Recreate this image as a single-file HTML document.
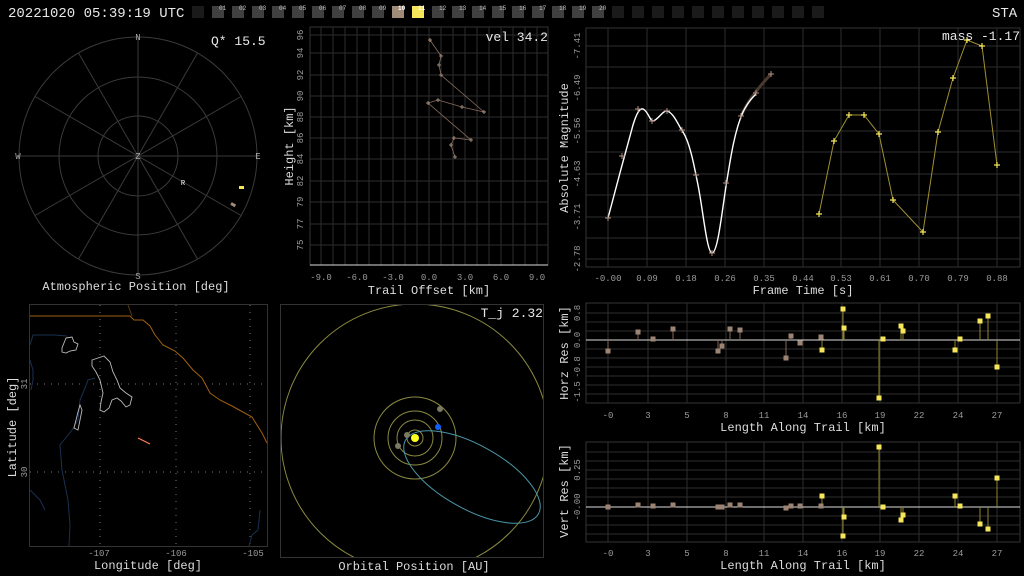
<!DOCTYPE html>
<html><head><meta charset="utf-8"><style>
html,body{margin:0;padding:0;background:#000;width:1024px;height:576px;overflow:hidden}
svg{display:block}
text{font-family:"Liberation Mono",monospace}
.t{fill:#ddd;font-size:12px}
.k{fill:#9a9a9a;font-size:9px}
.g{stroke:#2e2e2e;stroke-width:1;fill:none}
</style></head><body>
<svg width="1024" height="576" viewBox="0 0 1024 576" xmlns="http://www.w3.org/2000/svg">
<text x="8" y="17" fill="#e8e8e8" font-size="14">20221020 05:39:19 UTC</text>
<text x="992" y="17" fill="#e8e8e8" font-size="14">STA</text>
<g>
<rect x="192" y="6" width="12" height="12" fill="#1a1a1a"/>
<rect x="212" y="6" width="12" height="12" fill="#404040"/><rect x="232" y="6" width="12" height="12" fill="#404040"/>
<rect x="252" y="6" width="12" height="12" fill="#404040"/><rect x="272" y="6" width="12" height="12" fill="#404040"/>
<rect x="292" y="6" width="12" height="12" fill="#404040"/><rect x="312" y="6" width="12" height="12" fill="#404040"/>
<rect x="332" y="6" width="12" height="12" fill="#404040"/><rect x="352" y="6" width="12" height="12" fill="#404040"/>
<rect x="372" y="6" width="12" height="12" fill="#404040"/><rect x="392" y="6" width="12" height="12" fill="#a08a78"/>
<rect x="412" y="6" width="12" height="12" fill="#f5e65a"/><rect x="432" y="6" width="12" height="12" fill="#404040"/>
<rect x="452" y="6" width="12" height="12" fill="#404040"/><rect x="472" y="6" width="12" height="12" fill="#404040"/>
<rect x="492" y="6" width="12" height="12" fill="#404040"/><rect x="512" y="6" width="12" height="12" fill="#404040"/>
<rect x="532" y="6" width="12" height="12" fill="#404040"/><rect x="552" y="6" width="12" height="12" fill="#404040"/>
<rect x="572" y="6" width="12" height="12" fill="#404040"/><rect x="592" y="6" width="12" height="12" fill="#404040"/>
<rect x="612" y="6" width="12" height="12" fill="#1a1a1a"/><rect x="632" y="6" width="12" height="12" fill="#1a1a1a"/>
<rect x="652" y="6" width="12" height="12" fill="#1a1a1a"/><rect x="672" y="6" width="12" height="12" fill="#1a1a1a"/>
<rect x="692" y="6" width="12" height="12" fill="#1a1a1a"/><rect x="712" y="6" width="12" height="12" fill="#1a1a1a"/>
<rect x="732" y="6" width="12" height="12" fill="#1a1a1a"/><rect x="752" y="6" width="12" height="12" fill="#1a1a1a"/>
<rect x="772" y="6" width="12" height="12" fill="#1a1a1a"/><rect x="792" y="6" width="12" height="12" fill="#1a1a1a"/>
<rect x="812" y="6" width="12" height="12" fill="#1a1a1a"/>
</g>
<g font-size="6" fill="#bbb">
<text x="219" y="10">01</text><text x="239" y="10">02</text><text x="259" y="10">03</text><text x="279" y="10">04</text><text x="299" y="10">05</text>
<text x="319" y="10">06</text><text x="339" y="10">07</text><text x="359" y="10">08</text><text x="379" y="10">09</text><text x="398" y="10" fill="#fff" font-weight="bold">10</text>
<text x="418" y="10" fill="#fff" font-weight="bold">11</text><text x="439" y="10">12</text><text x="459" y="10">13</text><text x="479" y="10">14</text><text x="499" y="10">15</text>
<text x="519" y="10">16</text><text x="539" y="10">17</text><text x="559" y="10">18</text><text x="579" y="10">19</text><text x="599" y="10">20</text>
</g>

<g stroke="#3a3a3a" fill="none">
<circle cx="138" cy="156" r="40"/><circle cx="138" cy="156" r="79"/><circle cx="138" cy="156" r="119"/>
<line x1="138" y1="37" x2="138" y2="275"/><line x1="19" y1="156" x2="257" y2="156"/>
<line x1="78.5" y1="53" x2="197.5" y2="259"/><line x1="197.5" y1="53" x2="78.5" y2="259"/>
<line x1="35" y1="96.5" x2="241" y2="215.5"/><line x1="241" y1="96.5" x2="35" y2="215.5"/>
</g>
<g font-size="9" fill="#aaa" text-anchor="middle">
<text x="138" y="40">N</text><text x="138" y="279">S</text><text x="18" y="159">W</text><text x="258" y="159">E</text><text x="138" y="159">Z</text>
</g>
<text x="183" y="185" font-size="7" fill="#fff" text-anchor="middle">R</text>
<rect x="239" y="186" width="5" height="3" fill="#f5e65a"/>
<rect x="231" y="203" width="5" height="3" fill="#a08a78" transform="rotate(30 233 204)"/>
<text x="211" y="45" fill="#e8e8e8" font-size="13">Q* 15.5</text>
<text class="t" x="136" y="290" text-anchor="middle">Atmospheric Position [deg]</text>

<rect x="310" y="27" width="238" height="238" fill="none" stroke="#333"/>
<g class="g">
<path d="M321 27V265M333 27V265M345 27V265M357 27V265M369 27V265M381 27V265M393 27V265M405 27V265M417 27V265M429 27V265M441 27V265M453 27V265M465 27V265M477 27V265M489 27V265M501 27V265M513 27V265M525 27V265M537 27V265"/>
<path d="M310 35H548M310 53H548M310 75H548M310 96H548M310 117H548M310 138H548M310 159H548M310 181H548M310 202H548M310 224H548M310 245H548"/>
</g>
<line x1="310" y1="265" x2="548" y2="265" stroke="#ddd"/>
<polyline fill="none" stroke="#8a6e5e" stroke-width="0.8" points="430,40 441,56 439,65 441,75 484,112 462,107 438,100 428,103 471,140 454,138 451,145 455,157"/>
<g stroke="#a08a78" stroke-width="1" fill="none">
<path d="M428 40h4M430 38v4M439 56h4M441 54v4M437 65h4M439 63v4M439 75h4M441 73v4M482 112h4M484 110v4M460 107h4M462 105v4M436 100h4M438 98v4M426 103h4M428 101v4M469 140h4M471 138v4M452 138h4M454 136v4M449 145h4M451 143v4M453 157h4M455 155v4"/>
</g>
<g class="k" text-anchor="middle">
<text x="321" y="280">-9.0</text><text x="357" y="280">-6.0</text><text x="393" y="280">-3.0</text><text x="429" y="280">0.0</text><text x="465" y="280">3.0</text><text x="501" y="280">6.0</text><text x="537" y="280">9.0</text>
</g>
<g class="k" text-anchor="middle">
<text transform="translate(303 35) rotate(-90)">96</text><text transform="translate(303 53) rotate(-90)">94</text><text transform="translate(303 75) rotate(-90)">92</text>
<text transform="translate(303 96) rotate(-90)">90</text><text transform="translate(303 117) rotate(-90)">88</text><text transform="translate(303 138) rotate(-90)">86</text>
<text transform="translate(303 159) rotate(-90)">84</text><text transform="translate(303 181) rotate(-90)">82</text><text transform="translate(303 202) rotate(-90)">79</text>
<text transform="translate(303 224) rotate(-90)">77</text><text transform="translate(303 245) rotate(-90)">75</text>
</g>
<text class="t" transform="translate(293 146) rotate(-90)" text-anchor="middle">Height [km]</text>
<text class="t" x="429" y="294" text-anchor="middle">Trail Offset [km]</text>
<text x="548" y="41" fill="#e8e8e8" font-size="13" text-anchor="end">vel 34.2</text>

<rect x="586" y="28" width="434" height="239" fill="none" stroke="#333"/>
<g class="g">
<path d="M608 28V267M647 28V267M686 28V267M725 28V267M764 28V267M803 28V267M841 28V267M880 28V267M919 28V267M958 28V267M997 28V267"/>
<path d="M586 46H1020M586 67H1020M586 88H1020M586 110H1020M586 131H1020M586 152H1020M586 174H1020M586 195H1020M586 217H1020M586 238H1020M586 259H1020"/>
</g>
<path d="M741 116 C748 100 760 86 771 74" stroke="#4a3a30" stroke-width="3" fill="none"/>
<path d="M608 218 C614 195 626 150 633 125 C637 112 640 108 643 109 C648 111 650 121 653 121 C658 120 663 110 667 111 C674 113 678 125 683 132 C690 143 694 165 698 185 C703 210 707 253 712 253 C718 253 722 210 727 180 C731 155 735 130 743 112 C748 102 752 98 756 94" stroke="#fff" stroke-width="1.4" fill="none"/>
<g stroke="#b09080" stroke-width="1" fill="none">
<path d="M605 218h6M608 215v6M619 156h6M622 153v6M635 109h6M638 106v6M649 121h6M652 118v6M664 111h6M667 108v6M679 130h6M682 127v6M693 175h6M696 172v6M709 253h6M712 250v6M723 183h6M726 180v6M738 116h6M741 113v6M753 93h6M756 90v6M768 74h6M771 71v6"/>
</g>
<polyline fill="none" stroke="#a09030" stroke-width="1" points="819,214 834,141 849,115 864,115 879,134 893,200 923,232 938,132 953,78 967,40 982,46 997,165"/>
<g stroke="#f5e65a" stroke-width="1.2" fill="none">
<path d="M816 214h6M819 211v6M831 141h6M834 138v6M846 115h6M849 112v6M861 115h6M864 112v6M876 134h6M879 131v6M890 200h6M893 197v6M920 232h6M923 229v6M935 132h6M938 129v6M950 78h6M953 75v6M964 40h6M967 37v6M979 46h6M982 43v6M994 165h6M997 162v6"/>
</g>
<g class="k" text-anchor="middle">
<text x="608" y="281">-0.00</text><text x="647" y="281">0.09</text><text x="686" y="281">0.18</text><text x="725" y="281">0.26</text><text x="764" y="281">0.35</text><text x="803" y="281">0.44</text><text x="841" y="281">0.53</text><text x="880" y="281">0.61</text><text x="919" y="281">0.70</text><text x="958" y="281">0.79</text><text x="997" y="281">0.88</text>
</g>
<g class="k" text-anchor="middle">
<text transform="translate(580 46) rotate(-90)">-7.41</text><text transform="translate(580 88) rotate(-90)">-6.49</text><text transform="translate(580 131) rotate(-90)">-5.56</text>
<text transform="translate(580 174) rotate(-90)">-4.63</text><text transform="translate(580 217) rotate(-90)">-3.71</text><text transform="translate(580 259) rotate(-90)">-2.78</text>
</g>
<text class="t" transform="translate(568 148) rotate(-90)" text-anchor="middle">Absolute Magnitude</text>
<text class="t" x="803" y="294" text-anchor="middle">Frame Time [s]</text>
<text x="1020" y="40" fill="#e8e8e8" font-size="13" text-anchor="end">mass -1.17</text>

<rect x="586" y="303" width="434" height="100" fill="none" stroke="#333"/>
<g class="g">
<path d="M608 303V403M648 303V403M687 303V403M726 303V403M764 303V403M803 303V403M842 303V403M880 303V403M919 303V403M958 303V403M997 303V403"/>
<path d="M586 313H1020M586 322H1020M586 331H1020M586 349H1020M586 358H1020M586 367H1020M586 376H1020M586 385H1020M586 394H1020"/>
</g>
<line x1="586" y1="340" x2="1020" y2="340" stroke="#ddd"/>
<g stroke="#806858"><path d="M608 340V351M638 340V332M653 340V339M673 340V329M718 340V351M722 340V346M730 340V329M740 340V330M786 340V358M791 340V336M800 340V343M821 340V337"/></g>
<g stroke="#908430"><path d="M822 340V350M843 340V309M844 340V328M879 340V398M883 340V339M901 340V326M903 340V331M955 340V350M960 340V339M980 340V321M988 340V316M997 340V367"/></g>
<g fill="#9c8474">
<rect x="605.5" y="348.5" width="5" height="5"/><rect x="635.5" y="329.5" width="5" height="5"/><rect x="650.5" y="336.5" width="5" height="5"/><rect x="670.5" y="326.5" width="5" height="5"/><rect x="715.5" y="348.5" width="5" height="5"/><rect x="719.5" y="343.5" width="5" height="5"/><rect x="727.5" y="326.5" width="5" height="5"/><rect x="737.5" y="327.5" width="5" height="5"/><rect x="783.5" y="355.5" width="5" height="5"/><rect x="788.5" y="333.5" width="5" height="5"/><rect x="797.5" y="340.5" width="5" height="5"/><rect x="818.5" y="334.5" width="5" height="5"/>
</g>
<g fill="#f5e65a">
<rect x="819.5" y="347.5" width="5" height="5"/><rect x="840.5" y="306.5" width="5" height="5"/><rect x="841.5" y="325.5" width="5" height="5"/><rect x="876.5" y="395.5" width="5" height="5"/><rect x="880.5" y="336.5" width="5" height="5"/><rect x="898.5" y="323.5" width="5" height="5"/><rect x="900.5" y="328.5" width="5" height="5"/><rect x="952.5" y="347.5" width="5" height="5"/><rect x="957.5" y="336.5" width="5" height="5"/><rect x="977.5" y="318.5" width="5" height="5"/><rect x="985.5" y="313.5" width="5" height="5"/><rect x="994.5" y="364.5" width="5" height="5"/>
</g>
<g class="k" text-anchor="middle">
<text x="608" y="418">-0</text><text x="648" y="418">3</text><text x="687" y="418">5</text><text x="726" y="418">8</text><text x="764" y="418">11</text><text x="803" y="418">14</text><text x="842" y="418">16</text><text x="880" y="418">19</text><text x="919" y="418">22</text><text x="958" y="418">24</text><text x="997" y="418">27</text>
</g>
<g class="k" text-anchor="middle">
<text transform="translate(580 313) rotate(-90)">0.8</text><text transform="translate(580 340) rotate(-90)">0.0</text><text transform="translate(580 367) rotate(-90)">-0.8</text><text transform="translate(580 392) rotate(-90)">-1.5</text>
</g>
<text class="t" transform="translate(568 353) rotate(-90)" text-anchor="middle">Horz Res [km]</text>
<text class="t" x="803" y="431" text-anchor="middle">Length Along Trail [km]</text>

<rect x="586" y="442" width="434" height="100" fill="none" stroke="#333"/>
<g class="g">
<path d="M608 442V542M648 442V542M687 442V542M726 442V542M764 442V542M803 442V542M842 442V542M880 442V542M919 442V542M958 442V542M997 442V542"/>
<path d="M586 452H1020M586 461H1020M586 470H1020M586 479H1020M586 488H1020M586 497H1020M586 516H1020M586 525H1020M586 534H1020"/>
</g>
<line x1="586" y1="507" x2="1020" y2="507" stroke="#ddd"/>
<g stroke="#908430"><path d="M822 507V496M843 507V536M844 507V517M879 507V447M901 507V520M903 507V515M955 507V496M980 507V524M988 507V529M997 507V478"/></g>
<g fill="#9c8474">
<rect x="605.5" y="504.5" width="5" height="5"/><rect x="635.5" y="502.5" width="5" height="5"/><rect x="650.5" y="503.5" width="5" height="5"/><rect x="670.5" y="502.5" width="5" height="5"/><rect x="715.5" y="504.5" width="5" height="5"/><rect x="719.5" y="504.5" width="5" height="5"/><rect x="727.5" y="502.5" width="5" height="5"/><rect x="737.5" y="502.5" width="5" height="5"/><rect x="783.5" y="505.5" width="5" height="5"/><rect x="788.5" y="503.5" width="5" height="5"/><rect x="797.5" y="503.5" width="5" height="5"/><rect x="818.5" y="503.5" width="5" height="5"/>
</g>
<g fill="#f5e65a">
<rect x="819.5" y="493.5" width="5" height="5"/><rect x="840.5" y="533.5" width="5" height="5"/><rect x="841.5" y="514.5" width="5" height="5"/><rect x="876.5" y="444.5" width="5" height="5"/><rect x="880.5" y="504.5" width="5" height="5"/><rect x="898.5" y="517.5" width="5" height="5"/><rect x="900.5" y="512.5" width="5" height="5"/><rect x="952.5" y="493.5" width="5" height="5"/><rect x="957.5" y="503.5" width="5" height="5"/><rect x="977.5" y="521.5" width="5" height="5"/><rect x="985.5" y="526.5" width="5" height="5"/><rect x="994.5" y="475.5" width="5" height="5"/>
</g>
<g class="k" text-anchor="middle">
<text x="608" y="556">-0</text><text x="648" y="556">3</text><text x="687" y="556">5</text><text x="726" y="556">8</text><text x="764" y="556">11</text><text x="803" y="556">14</text><text x="842" y="556">16</text><text x="880" y="556">19</text><text x="919" y="556">22</text><text x="958" y="556">24</text><text x="997" y="556">27</text>
</g>
<g class="k" text-anchor="middle">
<text transform="translate(580 470) rotate(-90)">0.25</text><text transform="translate(580 507) rotate(-90)">-0.00</text>
</g>
<text class="t" transform="translate(568 491) rotate(-90)" text-anchor="middle">Vert Res [km]</text>
<text class="t" x="803" y="569" text-anchor="middle">Length Along Trail [km]</text>

<rect x="29.5" y="304.5" width="238" height="242" fill="none" stroke="#333"/>
<g stroke="#777" stroke-dasharray="1 6">
<path d="M100 305V546M176 305V546M250 305V546M30 384H267M30 472H267"/>
</g>
<path d="M30 316H130 L134 320 L143 320 L150 326 L155 335 L163 345 L175 351 L183 358 L193 370 L202 378 L210 393 L220 400 L232 406 L252 417 L262 433 L267 443" stroke="#a06010" fill="none"/>
<path d="M128 305 L132 316" stroke="#5a3a10" fill="none"/>
<g stroke="#1a3050" fill="none">
<path d="M30 345 L33 335 L55 335 L67 336"/>
<path d="M30 360 L33 370 L33 380 L31 390"/>
<path d="M95 378 L88 380 L85 388 L80 400 L78 420 L72 430 L60 445 L62 470 L68 500 L70 525 L69 546"/>
<path d="M30 490 L40 500 L45 510"/>
<path d="M260 510 L258 530 L252 535 L249 546"/>
</g>
<g stroke="#bbb" fill="none" stroke-width="0.9">
<path d="M66 338 L72 337 L74 342 L78 344 L76 350 L70 351 L66 353 L62 352 L62 348 Z"/>
<path d="M92 360 L98 358 L104 356 L110 362 L113 372 L117 380 L120 388 L126 393 L132 397 L130 405 L126 407 L121 401 L117 398 L112 400 L109 408 L104 412 L100 410 L101 402 L103 393 L100 380 L96 372 L92 366 Z"/>
<path d="M80 405 L78 412 L76 420 L74 428 L78 430 L80 420 L82 410 Z"/>
</g>
<line x1="138" y1="438" x2="150" y2="444" stroke="#ff8050" stroke-width="1.2"/>
<g class="k" text-anchor="middle">
<text x="99" y="556">-107</text><text x="176" y="556">-106</text><text x="253" y="556">-105</text>
<text transform="translate(27 384) rotate(-90)">31</text><text transform="translate(27 472) rotate(-90)">30</text>
</g>
<text class="t" x="148" y="569" text-anchor="middle">Longitude [deg]</text>
<text class="t" transform="translate(16 427) rotate(-90)" text-anchor="middle">Latitude [deg]</text>

<rect x="280.5" y="304.5" width="263" height="253" fill="none" stroke="#333"/>
<defs><clipPath id="oc"><rect x="281" y="305" width="262" height="252"/></clipPath></defs>
<g clip-path="url(#oc)" fill="none" stroke="#8a8a40">
<circle cx="415" cy="438" r="134"/>
<circle cx="415" cy="438" r="41"/>
<circle cx="415" cy="438" r="27"/>
<circle cx="415" cy="438" r="18"/>
<circle cx="415" cy="438" r="8"/>
<ellipse cx="472" cy="477" rx="76" ry="32" transform="rotate(29 472 477)" stroke="#4a98a8"/>
</g>
<circle cx="415" cy="438" r="4" fill="#ffff20"/>
<circle cx="440" cy="409" r="3" fill="#7a7a60"/>
<circle cx="407" cy="435" r="3" fill="#7a7a60"/>
<circle cx="398" cy="446" r="3" fill="#7a7a60"/>
<circle cx="438" cy="427" r="3" fill="#1060ff"/>
<text x="543" y="317" fill="#e8e8e8" font-size="13" text-anchor="end">T_j 2.32</text>
<text class="t" x="414" y="570" text-anchor="middle">Orbital Position [AU]</text>
</svg>
</body></html>
